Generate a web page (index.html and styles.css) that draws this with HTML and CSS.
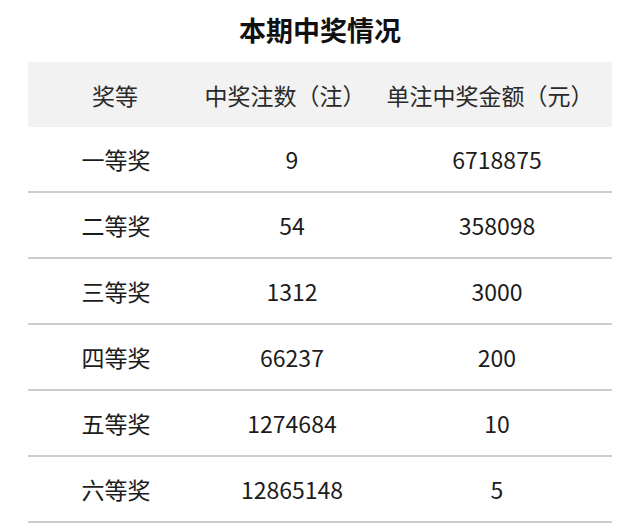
FILE: index.html
```html
<!DOCTYPE html>
<html lang="zh-CN">
<head>
<meta charset="utf-8">
<link rel="stylesheet" href="styles.css">
</head>
<body>
<div class="page">
  <h1 class="title">本期中奖情况</h1>
  <div class="table">
    <div class="row head">
      <div class="cell">奖等</div>
      <div class="cell">中奖注数（注）</div>
      <div class="cell">单注中奖金额（元）</div>
    </div>
    <div class="row body">
      <div class="cell">一等奖</div>
      <div class="cell num">9</div>
      <div class="cell num">6718875</div>
    </div>
    <div class="row body">
      <div class="cell">二等奖</div>
      <div class="cell num">54</div>
      <div class="cell num">358098</div>
    </div>
    <div class="row body">
      <div class="cell">三等奖</div>
      <div class="cell num">1312</div>
      <div class="cell num">3000</div>
    </div>
    <div class="row body">
      <div class="cell">四等奖</div>
      <div class="cell num">66237</div>
      <div class="cell num">200</div>
    </div>
    <div class="row body">
      <div class="cell">五等奖</div>
      <div class="cell num">1274684</div>
      <div class="cell num">10</div>
    </div>
    <div class="row body">
      <div class="cell">六等奖</div>
      <div class="cell num">12865148</div>
      <div class="cell num">5</div>
    </div>
  </div>
</div>
</body>
</html>
```
FILE: styles.css
```css
html, body {
  margin: 0;
  padding: 0;
  background: #ffffff;
}
body {
  font-family: "Noto Sans CJK SC", "Noto Sans", sans-serif;
  color: #1c1c1c;
}
.page {
  display: flex;
  flex-direction: column;
  align-items: center;
}
.title {
  margin: 0;
  padding-top: 15px;
  height: 47px;
  box-sizing: border-box;
  font-size: 27px;
  line-height: 30px;
  font-weight: 700;
  color: #111111;
}
.table {
  width: 584px;
  align-self: flex-start;
  margin-left: 28px;
}
.row {
  display: grid;
  grid-template-columns: 174px 166px 244px;
  align-items: center;
}
.head {
  height: 65px;
  background: #f2f2f2;
  margin-top: 15px;
  color: #2a2a2a;
}
.body {
  height: 64px;
  border-bottom: 2px solid #cdcdcd;
}
.cell {
  text-align: center;
  font-size: 23px;
  line-height: 30px;
  white-space: nowrap;
}
.body .cell.num {
  padding-left: 14px;
}
.body .cell:first-child {
  padding-left: 2px;
}
```
